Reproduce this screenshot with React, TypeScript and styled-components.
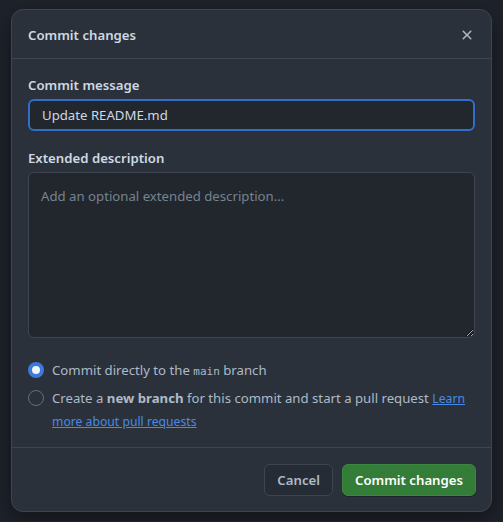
import styled, { createGlobalStyle } from "styled-components";

const GlobalStyle = createGlobalStyle`
    html, body {
        margin: 0;
        padding: 0;
        background: #1e222a;
    }
    body {
        font-family: "Noto Sans", "Liberation Sans", sans-serif;
        font-size: 13.2px;
        color: #adbac7;
    }
`;

const Page = styled.div`
    padding: 9px 11px;
`;

const Dialog = styled.div`
    width: 481px;
    box-sizing: border-box;
    background: #2b313b;
    border: 1px solid #3e4550;
    border-radius: 12px;
    box-shadow: 0 8px 24px rgba(0, 0, 0, 0.4);
`;

const Header = styled.div`
    display: flex;
    align-items: center;
    justify-content: space-between;
    height: 49px;
    padding: 2px 8px 0 16px;
    box-sizing: border-box;
    border-bottom: 1px solid #3e4550;
`;

const Title = styled.h1`
    margin: 0;
    font-size: 13.2px;
    font-weight: 600;
    color: #cdd9e5;
`;

const CloseButton = styled.button`
    display: flex;
    align-items: center;
    justify-content: center;
    width: 32px;
    height: 32px;
    padding: 0;
    border: 0;
    background: transparent;
    color: #adbac7;
    cursor: pointer;
`;

const Body = styled.div`
    display: flex;
    flex-direction: column;
    padding: 16px 16px 14px;
    border-bottom: 1px solid #3e4550;
`;

const Field = styled.div<{ $spaced?: boolean }>`
    display: flex;
    flex-direction: column;
    gap: 4px;
    margin-top: ${(p) => (p.$spaced ? "17px" : "0")};
`;

const Label = styled.label`
    font-size: 13.2px;
    font-weight: 600;
    line-height: 20px;
    color: #cdd9e5;
`;

const TextInput = styled.input`
    box-sizing: border-box;
    height: 32px;
    padding: 0 12px;
    font: inherit;
    font-size: 13.2px;
    color: #cdd9e5;
    background: #22272e;
    border: 2px solid #316dca;
    border-radius: 6px;
    outline: none;
`;

const TextArea = styled.textarea`
    box-sizing: border-box;
    height: 166px;
    padding: 13px 12px;
    font: inherit;
    font-size: 13.2px;
    line-height: 20px;
    color: #adbac7;
    background: #22272e;
    border: 1px solid #3e4550;
    border-radius: 6px;
    outline: none;
    resize: vertical;

    &::placeholder {
        color: #768390;
    }
`;

const Options = styled.div`
    display: flex;
    flex-direction: column;
    gap: 5px;
    margin-top: 21px;
`;

const Option = styled.label`
    display: flex;
    align-items: flex-start;
    gap: 8px;
    line-height: 23px;
    color: #adbac7;
`;

const Radio = styled.span<{ $checked?: boolean }>`
    flex: none;
    box-sizing: border-box;
    width: 16px;
    height: 16px;
    margin-top: 3px;
    border-radius: 50%;
    background: ${(p) => (p.$checked ? "#f0f4f8" : "transparent")};
    border: ${(p) => (p.$checked ? "4.5px solid #3c7bdb" : "1px solid #636e7b")};
`;

const Code = styled.code`
    font-family: "DejaVu Sans Mono", "Liberation Mono", monospace;
    font-size: 11px;
    line-height: 0;
`;

const Link = styled.a`
    color: #478be6;
    text-decoration: underline;
    font-size: 12.2px;
`;

const Footer = styled.div`
    display: flex;
    justify-content: flex-end;
    gap: 9px;
    padding: 16px 15px 15px;
`;

const Button = styled.button<{ $primary?: boolean }>`
    height: 32px;
    padding: 0 12px;
    font: inherit;
    font-size: 13.2px;
    font-weight: 600;
    border-radius: 6px;
    cursor: pointer;
    color: ${(p) => (p.$primary ? "#ffffff" : "#adbac7")};
    background: ${(p) => (p.$primary ? "#347d39" : "#262c36")};
    border: 1px solid ${(p) => (p.$primary ? "#3b8640" : "#3e4550")};
    box-shadow: ${(p) => (p.$primary ? "0 1px 0 rgba(0,0,0,0.3)" : "none")};
`;

const XIcon = () => (
    <svg width="16" height="16" viewBox="0 0 16 16" fill="currentColor">
        <path d="M3.72 3.72a.75.75 0 0 1 1.06 0L8 6.94l3.22-3.22a.749.749 0 0 1 1.275.326.749.749 0 0 1-.215.734L9.06 8l3.22 3.22a.749.749 0 0 1-.326 1.275.749.749 0 0 1-.734-.215L8 9.06l-3.22 3.22a.751.751 0 0 1-1.042-.018.751.751 0 0 1-.018-1.042L6.94 8 3.72 4.78a.75.75 0 0 1 0-1.06Z" />
    </svg>
);

export default function App() {
    return (
        <Page>
            <GlobalStyle />
            <Dialog>
                <Header>
                    <Title>Commit changes</Title>
                    <CloseButton aria-label="Close">
                        <XIcon />
                    </CloseButton>
                </Header>
                <Body>
                    <Field>
                        <Label>Commit message</Label>
                        <TextInput defaultValue="Update README.md" />
                    </Field>
                    <Field $spaced>
                        <Label>Extended description</Label>
                        <TextArea placeholder="Add an optional extended description..." />
                    </Field>
                    <Options>
                        <Option>
                            <Radio $checked />
                            <span>
                                Commit directly to the <Code>main</Code> branch
                            </span>
                        </Option>
                        <Option>
                            <Radio />
                            <span>
                                Create a <b>new branch</b> for this commit and start a pull request{" "}
                                <Link href="#">Learn more about pull requests</Link>
                            </span>
                        </Option>
                    </Options>
                </Body>
                <Footer>
                    <Button>Cancel</Button>
                    <Button $primary>Commit changes</Button>
                </Footer>
            </Dialog>
        </Page>
    );
}
